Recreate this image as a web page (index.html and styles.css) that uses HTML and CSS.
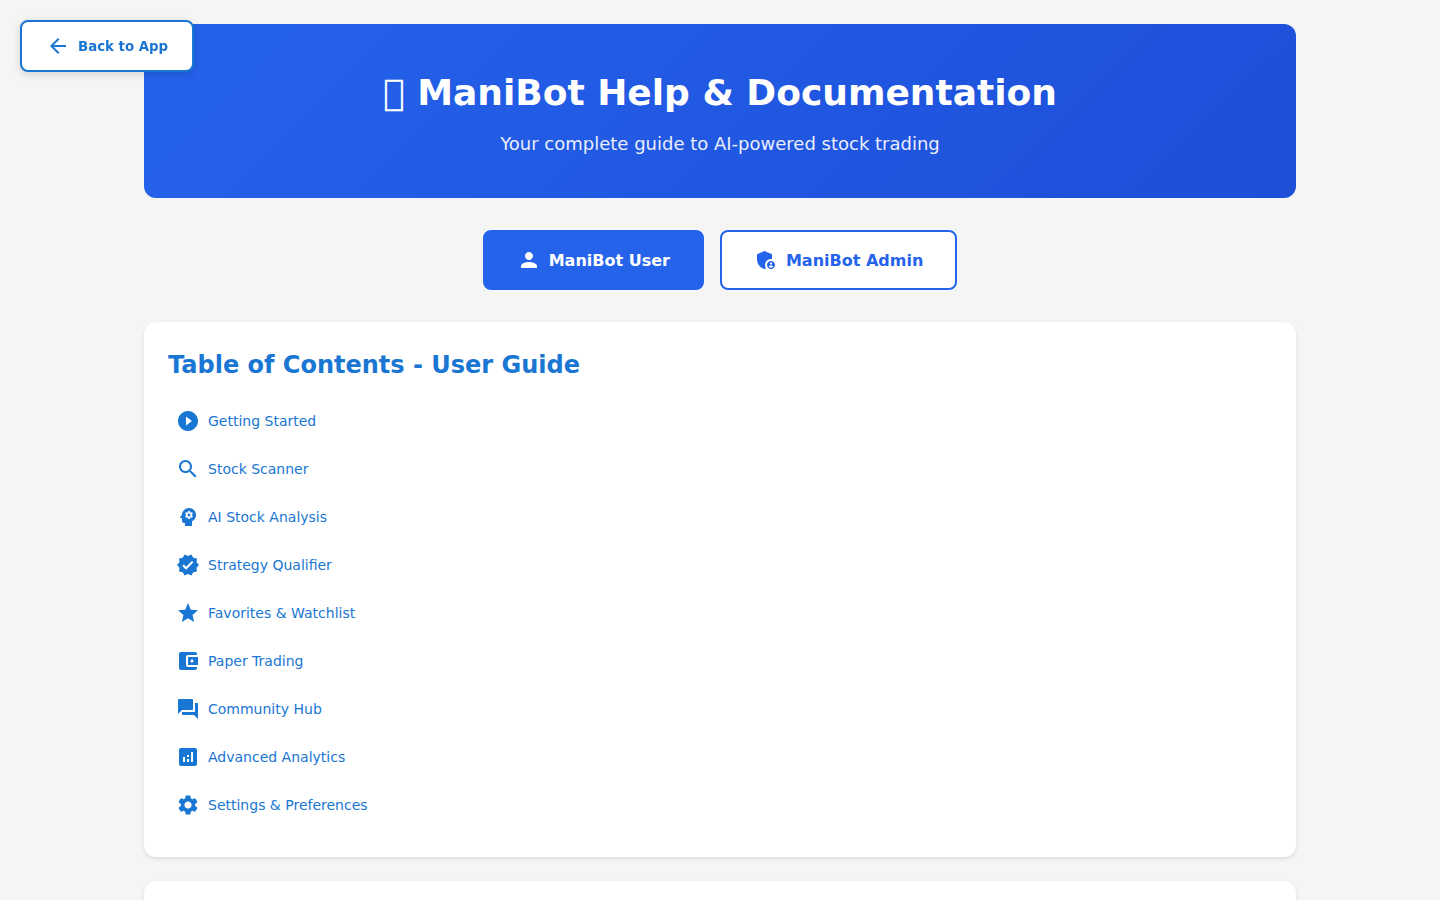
FILE: index.html
```html
<!DOCTYPE html>
<html lang="en">
<head>
<meta charset="utf-8">
<title>ManiBot Help &amp; Documentation</title>
<link rel="stylesheet" href="styles.css">
</head>
<body>
<a class="back-btn" href="#"><svg class="back-icon" viewBox="0 0 24 24"><path d="M20 11H7.83l5.59-5.59L12 4l-8 8 8 8 1.41-1.41L7.83 13H20v-2z"/></svg><span>Back to App</span></a>
<div class="container">
  <header class="hero">
    <h1 class="hero-title">&#xE000; ManiBot Help &amp; Documentation</h1>
    <p class="hero-sub">Your complete guide to AI-powered stock trading</p>
  </header>
  <div class="tabs">
    <button class="tab tab-active"><svg class="tab-icon" viewBox="0 0 24 24"><path d="M12 12c2.21 0 4-1.79 4-4s-1.79-4-4-4-4 1.79-4 4 1.79 4 4 4zm0 2c-2.67 0-8 1.34-8 4v2h16v-2c0-2.66-5.33-4-8-4z"/></svg>ManiBot User</button>
    <button class="tab"><svg class="tab-icon" viewBox="0 0 24 24"><path d="M17 11c.34 0 .67.04 1 .09V6.27L10.5 3 3 6.27v4.91c0 4.54 3.2 8.79 7.5 9.82.55-.13 1.08-.32 1.6-.55-.69-.98-1.1-2.17-1.1-3.45 0-3.31 2.69-6 6-6z"/><path d="M17 13c-2.21 0-4 1.79-4 4s1.79 4 4 4 4-1.79 4-4-1.79-4-4-4zm0 1.38c.62 0 1.12.51 1.12 1.12s-.51 1.12-1.12 1.12-1.12-.51-1.12-1.12.5-1.12 1.12-1.12zm0 5.37c-.93 0-1.74-.46-2.24-1.17.05-.72 1.51-1.08 2.24-1.08s2.19.36 2.24 1.08c-.5.71-1.31 1.17-2.24 1.17z"/></svg>ManiBot Admin</button>
  </div>
  <section class="card">
    <h2 class="card-title">Table of Contents - User Guide</h2>
    <ul class="toc">
      <li><a class="toc-link" href="#"><svg class="toc-icon" viewBox="0 0 24 24"><path d="M12 2C6.48 2 2 6.48 2 12s4.48 10 10 10 10-4.48 10-10S17.52 2 12 2zm-2 14.5v-9l6 4.5-6 4.5z"/></svg>Getting Started</a></li>
      <li><a class="toc-link" href="#"><svg class="toc-icon" viewBox="0 0 24 24"><path d="M15.5 14h-.79l-.28-.27C15.41 12.59 16 11.11 16 9.5 16 5.91 13.09 3 9.5 3S3 5.91 3 9.5 5.91 16 9.5 16c1.61 0 3.09-.59 4.23-1.57l.27.28v.79l5 4.99L20.49 19l-4.99-5zm-6 0C7.01 14 5 11.99 5 9.5S7.01 5 9.5 5 14 7.01 14 9.5 11.99 14 9.5 14z"/></svg>Stock Scanner</a></li>
      <li><a class="toc-link" href="#"><svg class="toc-icon" viewBox="0 0 24 24"><path d="M13 8.57c-.79 0-1.43.64-1.43 1.43s.64 1.43 1.43 1.43 1.43-.64 1.43-1.43-.64-1.43-1.43-1.43z"/><path d="M13 3C9.25 3 6.2 5.94 6.02 9.64L4.1 12.2c-.25.33-.01.8.4.8H6v3c0 1.1.9 2 2 2h1v3h7v-4.68c2.36-1.12 4-3.53 4-6.32 0-3.87-3.13-7-7-7zm3 7c0 .13-.01.26-.02.39l.83.66c.08.06.1.16.05.25l-.8 1.39c-.05.09-.16.12-.24.09l-.99-.4c-.21.16-.43.29-.67.39L14 13.83c-.01.1-.1.17-.2.17h-1.6c-.1 0-.18-.07-.2-.17l-.15-1.06c-.25-.1-.47-.23-.68-.39l-.99.4c-.09.03-.2 0-.25-.09l-.8-1.39c-.05-.08-.03-.19.05-.25l.84-.66c-.01-.13-.02-.26-.02-.39s.02-.27.04-.39l-.85-.66c-.08-.06-.1-.16-.05-.26l.8-1.38c.05-.09.15-.12.24-.09l1 .4c.2-.15.43-.29.67-.39L12 6.17c.02-.1.1-.17.2-.17h1.6c.1 0 .18.07.2.17l.15 1.06c.24.1.46.23.67.39l1-.4c.09-.03.2 0 .24.09l.8 1.38c.05.09.03.2-.05.26l-.85.66c.03.12.04.25.04.39z"/></svg>AI Stock Analysis</a></li>
      <li><a class="toc-link" href="#"><svg class="toc-icon" viewBox="0 0 24 24"><path d="M23 12l-2.44-2.79.34-3.69-3.61-.82-1.89-3.2L12 2.96 8.6 1.5 6.71 4.69 3.1 5.5l.34 3.7L1 12l2.44 2.79-.34 3.7 3.61.82L8.6 22.5l3.4-1.47 3.4 1.46 1.89-3.19 3.61-.82-.34-3.69L23 12zm-12.91 4.72l-3.8-3.81 1.48-1.48 2.32 2.33 5.85-5.87 1.48 1.48-7.33 7.35z"/></svg>Strategy Qualifier</a></li>
      <li><a class="toc-link" href="#"><svg class="toc-icon" viewBox="0 0 24 24"><path d="M12 17.27L18.18 21l-1.64-7.03L22 9.24l-7.19-.61L12 2 9.19 8.63 2 9.24l5.46 4.73L5.82 21z"/></svg>Favorites &amp; Watchlist</a></li>
      <li><a class="toc-link" href="#"><svg class="toc-icon" viewBox="0 0 24 24"><path d="M21 18v1c0 1.1-.9 2-2 2H5c-1.11 0-2-.9-2-2V5c0-1.1.89-2 2-2h14c1.1 0 2 .9 2 2v1h-9c-1.11 0-2 .9-2 2v8c0 1.1.89 2 2 2h9zm-9-2h10V8H12v8zm4-2.5c-.83 0-1.5-.67-1.5-1.5s.67-1.5 1.5-1.5 1.5.67 1.5 1.5-.67 1.5-1.5 1.5z"/></svg>Paper Trading</a></li>
      <li><a class="toc-link" href="#"><svg class="toc-icon" viewBox="0 0 24 24"><path d="M21 6h-2v9H6v2c0 .55.45 1 1 1h11l4 4V7c0-.55-.45-1-1-1zm-4 6V3c0-.55-.45-1-1-1H3c-.55 0-1 .45-1 1v14l4-4h10c.55 0 1-.45 1-1z"/></svg>Community Hub</a></li>
      <li><a class="toc-link" href="#"><svg class="toc-icon" viewBox="0 0 24 24"><path d="M19 3H5c-1.1 0-2 .9-2 2v14c0 1.1.9 2 2 2h14c1.1 0 2-.9 2-2V5c0-1.1-.9-2-2-2zM9 17H7v-5h2v5zm4 0h-2v-3h2v3zm0-5h-2v-2h2v2zm4 5h-2V7h2v10z"/></svg>Advanced Analytics</a></li>
      <li><a class="toc-link" href="#"><svg class="toc-icon" viewBox="0 0 24 24"><path d="M19.14 12.94c.04-.3.06-.61.06-.94 0-.32-.02-.64-.07-.94l2.03-1.58c.18-.14.23-.41.12-.61l-1.92-3.32c-.12-.22-.37-.29-.59-.22l-2.39.96c-.5-.38-1.03-.7-1.62-.94l-.36-2.54c-.04-.24-.24-.41-.48-.41h-3.84c-.24 0-.43.17-.47.41l-.36 2.54c-.59.24-1.13.57-1.62.94l-2.39-.96c-.22-.08-.47 0-.59.22L2.74 8.87c-.12.21-.08.47.12.61l2.03 1.58c-.05.3-.09.63-.09.94s.02.64.07.94l-2.03 1.58c-.18.14-.23.41-.12.61l1.92 3.32c.12.22.37.29.59.22l2.39-.96c.5.38 1.03.7 1.62.94l.36 2.54c.05.24.24.41.48.41h3.84c.24 0 .44-.17.47-.41l.36-2.54c.59-.24 1.13-.56 1.62-.94l2.39.96c.22.08.47 0 .59-.22l1.92-3.32c.12-.22.07-.47-.12-.61l-2.01-1.58zM12 15.6c-1.98 0-3.6-1.62-3.6-3.6s1.62-3.6 3.6-3.6 3.6 1.62 3.6 3.6-1.62 3.6-3.6 3.6z"/></svg>Settings &amp; Preferences</a></li>
    </ul>
  </section>
  <section class="card card-next"></section>
</div>
</body>
</html>
```
FILE: styles.css
```css
* { box-sizing: border-box; }
html, body { margin: 0; padding: 0; }
body {
  background: #f5f5f5;
  font-family: "DejaVu Sans", sans-serif;
  color: #333;
}
.container {
  max-width: 1200px;
  margin: 0 auto;
  padding: 24px;
}
.back-btn {
  position: fixed;
  top: 20px;
  left: 20px;
  z-index: 10;
  display: flex;
  align-items: center;
  gap: 8px;
  height: 52px;
  padding: 0 24px;
  background: #fff;
  border: 2px solid #1976d2;
  border-radius: 8px;
  box-shadow: 0 2px 8px rgba(0,0,0,.15);
  color: #1976d2;
  font-size: 13.333px;
  font-weight: 600;
  text-decoration: none;
}
.back-icon { width: 24px; height: 24px; fill: currentColor; }
.hero {
  background: linear-gradient(135deg, #2563eb 0%, #1d4ed8 100%);
  border-radius: 12px;
  padding: 48px 32px 40px;
  text-align: center;
  color: #fff;
  margin-bottom: 32px;
  height: 174px;
}
.hero-title {
  margin: 0 0 19px;
  font-size: 36px;
  line-height: 42px;
  font-weight: 700;
}
.hero-sub {
  margin: 0;
  font-size: 18px;
  line-height: 21px;
  opacity: .9;
}
.tabs {
  display: flex;
  justify-content: center;
  gap: 16px;
  margin-bottom: 32px;
}
.tab {
  display: flex;
  align-items: center;
  gap: 8px;
  height: 60px;
  padding: 0 32px;
  background: #fff;
  border: 2px solid #2563eb;
  border-radius: 8px;
  color: #2563eb;
  font-family: inherit;
  font-size: 16px;
  font-weight: 600;
}
.tab-active { background: #2563eb; color: #fff; }
.tab-icon { width: 24px; height: 24px; fill: currentColor; }
.card {
  background: #fff;
  border-radius: 12px;
  box-shadow: 0 2px 4px rgba(0,0,0,.1);
  padding: 24px;
  margin-bottom: 24px;
}
.card-next { height: 400px; }
.card-title {
  margin: 0 0 13px;
  color: #1976d2;
  font-size: 24px;
  line-height: 38px;
  font-weight: 700;
}
.toc { list-style: none; margin: 0; padding: 0 0 4px; }
.toc-link {
  display: flex;
  align-items: center;
  gap: 8px;
  height: 48px;
  padding: 0 8px;
  color: #1976d2;
  font-size: 14px;
  text-decoration: none;
}
.toc-icon { width: 24px; height: 24px; fill: currentColor; flex: none; }
```
